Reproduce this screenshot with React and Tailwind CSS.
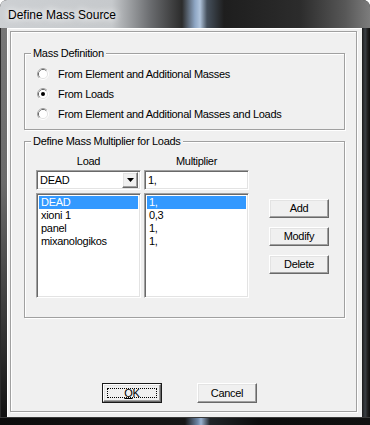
const raised =
  "bg-[#f0f0f0] border border-t-white border-l-white border-r-[#696969] border-b-[#696969] shadow-[inset_-1px_-1px_0_#a0a0a0,inset_1px_1px_0_#e3e3e3]";
const sunken =
  "bg-white border border-t-[#a0a0a0] border-l-[#a0a0a0] border-r-white border-b-white shadow-[inset_1px_1px_0_#696969,inset_-1px_-1px_0_#e3e3e3]";

function Radio({ checked }) {
  return (
    <svg width="12" height="12" viewBox="0 0 12 12" className="shrink-0">
      <circle cx="6" cy="6" r="5.5" fill="none" stroke="#ffffff" />
      <path d="M2.11 9.89 A5.5 5.5 0 0 1 9.89 2.11" fill="none" stroke="#a0a0a0" />
      <circle cx="6" cy="6" r="4.5" fill="none" stroke="#e3e3e3" />
      <path d="M2.82 9.18 A4.5 4.5 0 0 1 9.18 2.82" fill="none" stroke="#696969" />
      <circle cx="6" cy="6" r="4" fill="#ffffff" />
      {checked && <circle cx="6" cy="6" r="2" fill="#000000" />}
    </svg>
  );
}

function Group({ label, className, children }) {
  return (
    <div
      className={
        "relative border border-[#a0a0a0] shadow-[inset_1px_1px_0_#fff,1px_1px_0_#fff] " +
        className
      }
    >
      <span className="absolute -top-[8px] left-[6px] bg-[#f0f0f0] px-[2px] leading-[14px]">
        {label}
      </span>
      {children}
    </div>
  );
}

function Button({ children, className = "" }) {
  return (
    <button
      className={
        raised +
        " w-[60px] h-[19px] flex items-center justify-center leading-none text-[11px] tracking-[-0.3px] text-black " +
        className
      }
    >
      {children}
    </button>
  );
}

const loads = [
  ["DEAD", "1,"],
  ["xioni 1", "0,3"],
  ["panel", "1,"],
  ["mixanologikos", "1,"],
];

export default function App() {
  return (
    <div className="w-[370px] h-[425px] flex flex-col overflow-hidden rounded-t-[7px] bg-[#151515] font-['Liberation_Sans',Arial,sans-serif] text-[11px] tracking-[-0.3px] text-black">
      {/* title bar */}
      <div className="h-[28px] shrink-0 flex items-center pl-[8px] pt-[2px] bg-[linear-gradient(90deg,#cdd0d3_0px,#c6c9cc_112px,#6b6d70_150px,#2c2c2c_182px,#8ea6c4_195px,#b0c4dc_200px,#45505c_207px,#1e1e1e_224px,#2c2c2c_300px,#575757_345px,#7c7c7c_370px)]">
        <span className="text-[12px] tracking-normal text-black [text-shadow:0_0_6px_#ffffff,0_0_10px_#ffffff]">
          Define Mass Source
        </span>
      </div>

      <div className="flex flex-1">
        <div className="w-[7px] bg-[linear-gradient(180deg,#777_0%,#6a6a6a_40%,#2a2a2a_85%,#111_100%)] border-l border-[#2a2a2a]" />

        {/* client */}
        <div className="w-[355px] bg-[#f0f0f0] border-t border-l border-white flex">
          <div className="flex-1 ml-[2px] mr-[5px] mt-[2px] mb-[5px] border border-[#a0a0a0] shadow-[1px_1px_0_#fff,inset_1px_1px_0_#fff] flex flex-col pl-[13px]">
            <Group label="Mass Definition" className="mt-[21px] w-[321px] h-[77px] pt-[10px] pl-[12px]">
              {[
                ["From Element and Additional Masses", false],
                ["From Loads", true],
                ["From Element and Additional Masses and Loads", false],
              ].map(([t, c]) => (
                <div key={t} className="h-[20px] flex items-center gap-[9px]">
                  <Radio checked={c} />
                  <span>{t}</span>
                </div>
              ))}
            </Group>

            <Group
              label="Define Mass Multiplier for Loads"
              className="mt-[11px] w-[321px] h-[177px] pt-[12px] pl-[11px] flex"
            >
              <div className="flex gap-[3px]">
                <div className="w-[105px] flex flex-col">
                  <div className="h-[14px] leading-[14px] text-center">Load</div>
                  <div className={sunken + " mt-[2px] h-[20px] flex items-center justify-between pl-[3px] pr-[2px]"}>
                    <span>DEAD</span>
                    <div className={raised + " w-[16px] h-[16px] flex items-center justify-center"}>
                      <svg width="7" height="4" viewBox="0 0 7 4">
                        <path d="M0 0H7L3.5 4Z" fill="#000" />
                      </svg>
                    </div>
                  </div>
                  <div className={sunken + " mt-[3px] h-[105px] p-[2px]"}>
                    {loads.map(([n], i) => (
                      <div
                        key={n}
                        className={
                          "h-[13px] leading-[13px] pl-[2px] " +
                          (i === 0 ? "bg-[#3399ff] text-white" : "")
                        }
                      >
                        {n}
                      </div>
                    ))}
                  </div>
                </div>
                <div className="w-[105px] flex flex-col">
                  <div className="h-[14px] leading-[14px] text-center">Multiplier</div>
                  <div className={sunken + " mt-[2px] h-[20px] flex items-center pl-[3px]"}>
                    <span>1,</span>
                  </div>
                  <div className={sunken + " mt-[3px] h-[105px] p-[2px]"}>
                    {loads.map(([n, m], i) => (
                      <div
                        key={n}
                        className={
                          "h-[13px] leading-[13px] pl-[2px] " +
                          (i === 0 ? "bg-[#3399ff] text-white" : "")
                        }
                      >
                        {m}
                      </div>
                    ))}
                  </div>
                </div>
              </div>
              <div className="ml-[20px] mt-[45px] flex flex-col gap-[9px]">
                <Button>Add</Button>
                <Button>Modify</Button>
                <Button>Delete</Button>
              </div>
            </Group>

            <div className="mt-[65px] ml-[78px] flex gap-[35px]">
              <div className="w-[60px] h-[20px] border border-[#1a1a1a]">
                <button className={raised + " relative w-full h-full flex items-center justify-center text-[11px] text-black leading-none"}>
                  <span className="absolute inset-[3px] border border-dotted border-black" />
                  <span>
                    <span className="underline">O</span>K
                  </span>
                </button>
              </div>
              <Button className="h-[20px]">Cancel</Button>
            </div>
          </div>
        </div>

        <div className="flex-1 bg-[linear-gradient(90deg,#1c1c1c,#3a3f44_40%,#202020_70%,#0e0e0e)]" />
      </div>

      {/* bottom frame */}
      <div className="h-[8px] shrink-0 bg-[linear-gradient(90deg,#0c0c0c_0px,#161616_185px,#6e88a8_198px,#9ab2d0_201px,#202428_210px,#0c0c0c_260px,#111_370px)] border-t border-[#3a3a3a]" />
    </div>
  );
}
